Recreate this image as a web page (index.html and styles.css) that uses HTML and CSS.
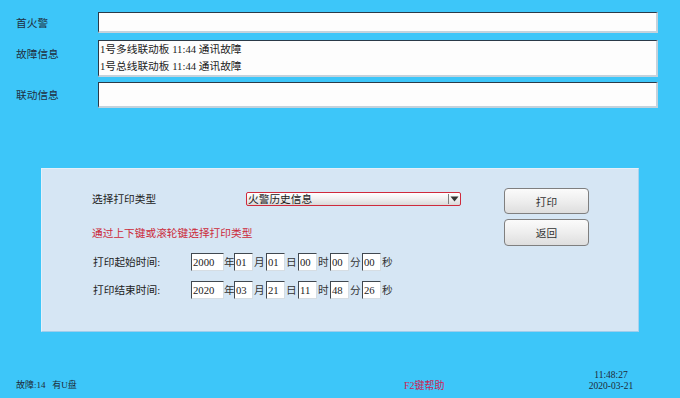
FILE: index.html
```html
<!DOCTYPE html>
<html lang="zh-CN">
<head>
<meta charset="utf-8">
<title>打印</title>
<link rel="stylesheet" href="styles.css">
</head>
<body>
<div class="screen">
  <div class="fields">
    <div class="frow r1">
      <span class="lbl">首火警</span>
      <div class="box b1"></div>
    </div>
    <div class="frow r2">
      <span class="lbl">故障信息</span>
      <div class="box b2">
        <div class="line">1号多线联动板 11:44 通讯故障</div>
        <div class="line">1号总线联动板 11:44 通讯故障</div>
      </div>
    </div>
    <div class="frow r3">
      <span class="lbl">联动信息</span>
      <div class="box b3"></div>
    </div>
  </div>

  <div class="panel">
    <div class="pleft">
      <div class="typerow">
        <span class="typelbl">选择打印类型</span>
        <div class="select">
          <span class="seltext">火警历史信息</span>
          <span class="arrow"><svg width="9" height="6" viewBox="0 0 9 6"><path d="M0.5 0.5 H8.5 L4.5 5.5 Z" fill="#333"/></svg></span>
        </div>
      </div>
      <div class="hint">通过上下键或滚轮键选择打印类型</div>
      <div class="daterow">
        <span class="dlbl">打印起始时间:</span>
        <span class="dbox year">2000</span><span class="unit uy">年</span>
        <span class="dbox">01</span><span class="unit">月</span>
        <span class="dbox">01</span><span class="unit">日</span>
        <span class="dbox">00</span><span class="unit">时</span>
        <span class="dbox">00</span><span class="unit">分</span>
        <span class="dbox">00</span><span class="unit">秒</span>
      </div>
      <div class="daterow second">
        <span class="dlbl">打印结束时间:</span>
        <span class="dbox year">2020</span><span class="unit uy">年</span>
        <span class="dbox">03</span><span class="unit">月</span>
        <span class="dbox">21</span><span class="unit">日</span>
        <span class="dbox">11</span><span class="unit">时</span>
        <span class="dbox">48</span><span class="unit">分</span>
        <span class="dbox">26</span><span class="unit">秒</span>
      </div>
    </div>
    <div class="pright">
      <button class="btn">打印</button>
      <button class="btn second">返回</button>
    </div>
  </div>

  <div class="footer">
    <span class="status">故障:14&nbsp;&nbsp;&nbsp;有U盘</span>
    <span class="help">F2键帮助</span>
    <span class="clock"><span>11:48:27</span><span>2020-03-21</span></span>
  </div>
</div>
</body>
</html>
```

FILE: styles.css
```css
* { box-sizing: border-box; }

html, body {
  margin: 0;
  padding: 0;
}

body {
  font-family: "Liberation Serif", "Noto Sans CJK SC", sans-serif;
  font-size: 10.7px;
  color: #1e2a36;
  background: #3dc6f9;
}

.screen {
  width: 680px;
  height: 398px;
  display: flex;
  flex-direction: column;
  background: #3dc6f9;
  overflow: hidden;
}

/* ---------- top fields ---------- */
.fields {
  padding: 12px 0 0 16px;
}

.frow {
  display: flex;
}

.lbl {
  width: 82px;
  line-height: 14px;
  color: #1f2f40;
}

.r1 { height: 21px; align-items: center; margin-bottom: 7px; }
.r2 { height: 37px; margin-bottom: 5px; }
.r2 .lbl { padding-top: 7px; }
.r3 { height: 26px; align-items: center; }

.box {
  width: 560px;
  height: 100%;
  background: #fdfdfd;
  border-style: solid;
  border-width: 1px 2px 2px 1px;
  border-color: #2b3a48 #c4d2dc #c4d2dc #2b3a48;
}

.b2 {
  padding-left: 1px;
  color: #222;
}

.b2 .line {
  line-height: 17px;
  white-space: nowrap;
}

/* ---------- panel ---------- */
.panel {
  margin: 60px 0 0 41px;
  width: 598px;
  height: 164px;
  background: #d6e6f4;
  border-style: solid;
  border-width: 1px;
  border-color: #e4f0fa #a9d2ee #9fcdec #e4f0fa;
  padding: 19px 0 0 50px;
  display: flex;
}

.pleft {
  width: 412px;
  flex: none;
}

.typerow {
  margin-top: 4px;
  height: 14px;
  display: flex;
  align-items: center;
}

.typelbl {
  width: 154px;
  line-height: 14px;
  color: #222;
}

.select {
  width: 215px;
  height: 14px;
  border: 1px solid #cf2a3c;
  border-radius: 2px;
  background: linear-gradient(#ffffff 0%, #f2f2f2 45%, #d9d9d9 100%);
  display: flex;
  align-items: center;
  justify-content: space-between;
}

.seltext {
  line-height: 12px;
  padding-left: 1px;
  color: #222;
}

.arrow {
  height: 10px;
  width: 12px;
  border-left: 1px solid #7d7d7d;
  display: flex;
  align-items: center;
  justify-content: center;
}

.arrow svg { display: block; }

.hint {
  margin-top: 20px;
  line-height: 14px;
  color: #cc2a3a;
}

.daterow {
  margin-top: 13px;
  height: 18px;
  display: flex;
  align-items: center;
}

.daterow.second { margin-top: 10px; }

.dlbl {
  width: 99px;
  padding-left: 1px;
  line-height: 14px;
  color: #222;
}

.dbox {
  width: 19px;
  height: 18px;
  background: #fff;
  border-style: solid;
  border-width: 1px;
  border-color: #404850 #d6dde3 #d6dde3 #404850;
  padding-left: 1px;
  line-height: 16px;
  color: #222;
  overflow: hidden;
}

.dbox.year { width: 33px; }

.unit {
  width: 13px;
  padding-left: 1px;
  line-height: 14px;
  color: #333;
}

.unit.uy { width: 10px; padding-left: 0; }

.pright {
  display: flex;
  flex-direction: column;
}

.btn {
  width: 85px;
  height: 26px;
  margin: 0;
  padding: 0;
  font: inherit;
  color: #333;
  border: 1px solid #7f7f7f;
  border-radius: 4px;
  background: linear-gradient(#fbfbfb 0%, #eeeeee 50%, #dedede 100%);
}

.btn.second {
  margin-top: 5px;
  height: 27px;
}

/* ---------- footer ---------- */
.footer {
  margin-top: auto;
  padding: 0 0 6px 16px;
  display: flex;
  align-items: flex-end;
}

.status {
  width: 388px;
  font-size: 9px;
  line-height: 11px;
  color: #1e2a36;
  padding-bottom: 1px;
}

.help {
  width: 184px;
  font-size: 10px;
  line-height: 12px;
  color: #cc1f55;
}

.clock {
  width: 46px;
  display: flex;
  flex-direction: column;
  align-items: center;
  font-size: 9.5px;
  line-height: 11px;
  color: #1e2a36;
}
```
